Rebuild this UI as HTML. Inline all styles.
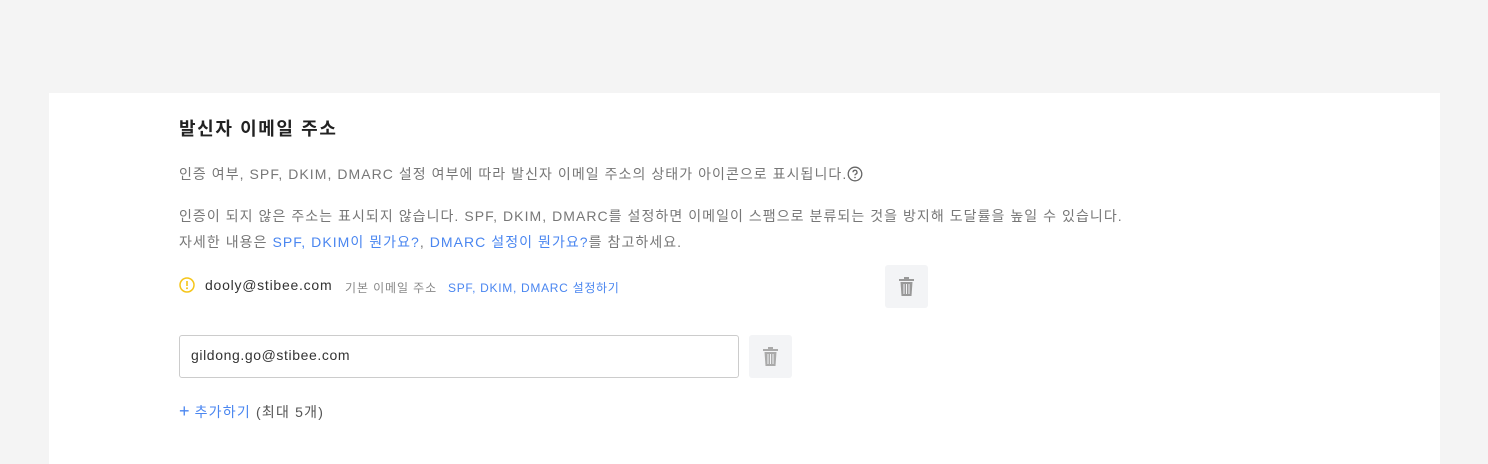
<!DOCTYPE html>
<html><head><meta charset="utf-8"><style>
body{margin:0;width:1488px;height:464px;background:#f4f4f4;font-family:"Liberation Sans","Noto Sans CJK KR",sans-serif;overflow:hidden;position:relative}
.card{position:absolute;left:49px;top:93px;width:1391px;height:371px;background:#fff}
.a{position:absolute;white-space:nowrap}
.g{color:#777;font-size:14px;letter-spacing:1.05px}
.b{color:#4a86f0}
.trash{position:absolute;width:43px;height:43px;background:#f3f4f6;border-radius:3px}
.trash svg{position:absolute;left:13px;top:12px}
</style></head><body>
<div class="card"></div>
<div class="a" style="left:179px;top:115px;font-size:18px;font-weight:bold;color:#222;letter-spacing:1.6px">발신자 이메일 주소</div>
<div class="a g" style="left:179px;top:164px">인증 여부, SPF, DKIM, DMARC 설정 여부에 따라 발신자 이메일 주소의 상태가 아이콘으로 표시됩니다.<svg width="16" height="16" viewBox="0 0 16 16" style="vertical-align:-3px;margin-left:0px"><circle cx="8" cy="8" r="6.8" fill="none" stroke="#666" stroke-width="1.3"/><path d="M6 6.3a2 2 0 1 1 2.6 1.9c-.5.2-.6.6-.6 1.2" fill="none" stroke="#666" stroke-width="1.3"/><circle cx="8" cy="11.5" r=".8" fill="#666"/></svg></div>
<div class="a g" style="left:179px;top:206px">인증이 되지 않은 주소는 표시되지 않습니다. SPF, DKIM, DMARC를 설정하면 이메일이 스팸으로 분류되는 것을 방지해 도달률을 높일 수 있습니다.</div>
<div class="a g" style="left:179px;top:232px">자세한 내용은 <span class="b">SPF, DKIM이 뭔가요?</span>, <span class="b">DMARC 설정이 뭔가요?</span>를 참고하세요.</div>
<svg class="a" style="left:179px;top:277px" width="16" height="16" viewBox="0 0 16 16"><circle cx="8" cy="8" r="7" fill="none" stroke="#f5c518" stroke-width="1.5"/><path d="M8 4v5" stroke="#f5c518" stroke-width="1.6"/><circle cx="8" cy="11.3" r="1" fill="#f5c518"/></svg>
<div class="a" style="left:205px;top:277px;font-size:14px;color:#333;letter-spacing:0.75px">dooly@stibee.com</div>
<div class="a" style="left:345px;top:279px;font-size:12px;color:#888;letter-spacing:0.9px">기본 이메일 주소</div>
<div class="a b" style="left:448px;top:279px;font-size:12px;letter-spacing:0.7px">SPF, DKIM, DMARC 설정하기</div>
<div class="trash" style="left:885px;top:265px"><svg width="17" height="19" viewBox="0 0 17 19"><rect x="1" y="2" width="15" height="2" fill="#999"/><rect x="6" y="0" width="5" height="2" fill="#999"/><path d="M2.5 5h12l-1 14h-10z" fill="#999"/><path d="M6 7v10M8.5 7v10M11 7v10" stroke="#f3f4f6" stroke-width="1"/></svg></div>
<div class="a" style="left:179px;top:335px;width:558px;height:41px;border:1px solid #ccc;border-radius:3px"></div>
<div class="a" style="left:191px;top:347px;font-size:14px;color:#333;letter-spacing:0.6px">gildong.go@stibee.com</div>
<div class="trash" style="left:749px;top:335px"><svg width="17" height="19" viewBox="0 0 17 19"><rect x="1" y="2" width="15" height="2" fill="#aaa"/><rect x="6" y="0" width="5" height="2" fill="#aaa"/><path d="M2.5 5h12l-1 14h-10z" fill="#aaa"/><path d="M6 7v10M8.5 7v10M11 7v10" stroke="#f3f4f6" stroke-width="1"/></svg></div>
<div class="a" style="left:179px;top:402px;font-size:14px;color:#555;letter-spacing:1.2px"><span class="b"><span style="font-size:18px;line-height:14px;letter-spacing:0">+</span> 추가하기</span> (최대 5개)</div>
</body></html>
